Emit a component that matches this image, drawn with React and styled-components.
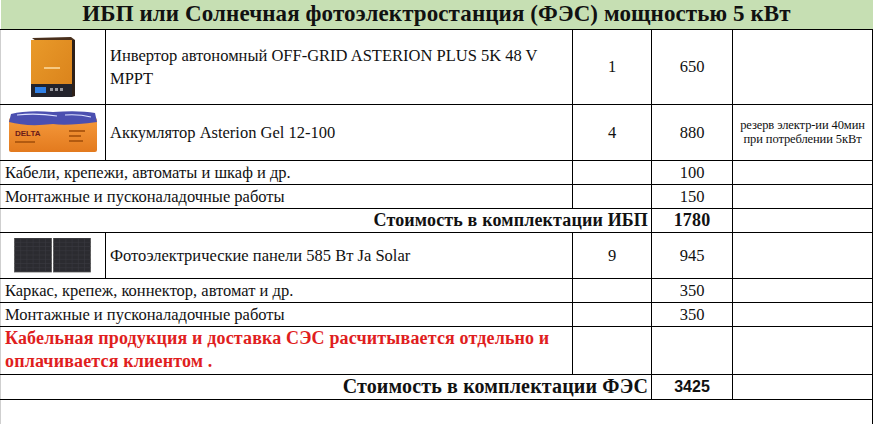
import React from 'react';
import styled, { createGlobalStyle } from 'styled-components';

const SERIF = `'Liberation Serif', 'Times New Roman', 'DejaVu Serif', serif`;
const SANS = `'Liberation Sans', Arial, sans-serif`;

const Global = createGlobalStyle`
  html, body { margin: 0; padding: 0; background: #fff; }
  body { font-family: ${SERIF}; }
`;

const Table = styled.table`
  width: 872px;
  border-collapse: collapse;
  table-layout: fixed;
  font-family: ${SERIF};
  font-size: 16px;
  color: #111;
`;

const Row = styled.tr`
  height: ${(p) => p.$h}px;
`;

const Title = styled.th`
  background: #c6dfb3;
  font-family: ${SERIF};
  font-size: 23px;
  letter-spacing: 0.1px;
  font-weight: bold;
  text-align: center;
  padding: 0;
  border-bottom: 1px solid #000;
  line-height: 26px;
  color: #111;
`;

const Cell = styled.td`
  border: 1px solid #000;
  padding: 0 ${(p) => (p.$align === 'right' ? '3px' : '4px')} 0 4px;
  vertical-align: middle;
  line-height: 23px;
  font-size: ${(p) => p.$size || 16.5}px;
  letter-spacing: ${(p) => (p.$bold && !p.$sans ? '0.15px' : '0')};
  text-align: ${(p) => p.$align || 'left'};
  font-weight: ${(p) => (p.$bold ? 'bold' : 'normal')};
  font-family: ${(p) => (p.$sans ? SANS : SERIF)};
  color: ${(p) => (p.$red ? '#e01e1e' : '#111')};
  overflow: hidden;
  &:first-child { border-left-color: #cfcfcf; }
`;

const NoteCell = styled(Cell)`
  padding: 0;
  text-align: center;
`;

const Note = styled.div`
  font-size: 12.5px;
  line-height: 14px;
  white-space: nowrap;
  letter-spacing: -0.1px;
  text-align: center;
`;

const PicCell = styled(Cell)`
  padding: 0;
  text-align: center;
  line-height: 0;
`;

const Inverter = () => (
  <svg width="48" height="62" viewBox="0 0 48 62">
    <defs>
      <linearGradient id="inv" x1="0" x2="1" y1="0" y2="1">
        <stop offset="0" stopColor="#e99a2a" />
        <stop offset="1" stopColor="#d9811a" />
      </linearGradient>
    </defs>
    <polygon points="3,2 42,1 46,4 7,5" fill="#4a301c" />
    <rect x="2" y="4" width="41" height="57" fill="url(#inv)" />
    <polygon points="43,4 46,4 46,60 43,61" fill="#2e2018" />
    <rect x="15" y="31" width="16" height="2" fill="#f6c983" />
    <rect x="2" y="48" width="41" height="13" fill="#23232c" />
    <rect x="6" y="51" width="11" height="6" fill="#2f80e6" />
    <rect x="21" y="52" width="3" height="3" fill="#9a9aa0" />
    <rect x="26" y="52" width="3" height="3" fill="#9a9aa0" />
    <rect x="31" y="52" width="3" height="3" fill="#9a9aa0" />
  </svg>
);

const Battery = () => (
  <svg width="92" height="44" viewBox="0 0 92 44">
    <defs>
      <linearGradient id="bat" x1="0" x2="0" y1="0" y2="1">
        <stop offset="0" stopColor="#f59a3c" />
        <stop offset="1" stopColor="#e37a1e" />
      </linearGradient>
    </defs>
    <rect x="2" y="8" width="88" height="34" rx="2" fill="url(#bat)" />
    <path d="M4 4 Q20 0 46 2 Q72 0 88 3 L90 12 Q60 16 46 14 Q20 17 2 12 Z" fill="#4b4fb0" />
    <path d="M10 5 Q30 3 50 6 M58 5 Q72 4 84 7" stroke="#dfe3ff" strokeWidth="1.2" fill="none" />
    <text x="8" y="26" fontFamily="Liberation Sans, Arial, sans-serif" fontWeight="bold" fontSize="8" fill="#6a1a1a">DELTA</text>
    <rect x="8" y="31" width="20" height="2" fill="#b25a10" />
    <rect x="62" y="20" width="16" height="2" fill="#b25a10" />
    <rect x="62" y="25" width="12" height="2" fill="#b25a10" />
    <rect x="62" y="30" width="14" height="2" fill="#b25a10" />
  </svg>
);

const Panel = ({ x }) => (
  <g>
    <rect x={x} y="0" width="37" height="34" fill="#2b2b30" stroke="#555" strokeWidth="0.8" />
    {[1, 2, 3, 4, 5, 6, 7].map((i) => (
      <line key={'h' + i} x1={x} x2={x + 37} y1={i * 4.25} y2={i * 4.25} stroke="#3b3b42" strokeWidth="0.6" />
    ))}
    {[1, 2, 3, 4, 5].map((i) => (
      <line key={'v' + i} x1={x + i * 6.2} x2={x + i * 6.2} y1="0" y2="34" stroke="#3b3b42" strokeWidth="0.6" />
    ))}
  </g>
);

const Solar = () => (
  <svg width="78" height="35" viewBox="0 0 78 35">
    <Panel x={0.5} />
    <Panel x={39.5} />
  </svg>
);

export default function App() {
  return (
    <>
      <Global />
      <Table>
        <colgroup>
          <col style={{ width: 105 }} />
          <col style={{ width: 467 }} />
          <col style={{ width: 79 }} />
          <col style={{ width: 81 }} />
          <col style={{ width: 140 }} />
        </colgroup>
        <tbody>
          <Row $h={29}>
            <Title colSpan={5}>ИБП или Солнечная фотоэлектростанция (ФЭС) мощностью 5 кВт</Title>
          </Row>
          <Row $h={75}>
            <PicCell><Inverter /></PicCell>
            <Cell>Инвертор автономный OFF-GRID ASTERION PLUS 5K 48 V MPPT</Cell>
            <Cell $align="center">1</Cell>
            <Cell $align="center">650</Cell>
            <Cell />
          </Row>
          <Row $h={56}>
            <PicCell><Battery /></PicCell>
            <Cell>Аккумлятор Asterion Gel 12-100</Cell>
            <Cell $align="center">4</Cell>
            <Cell $align="center">880</Cell>
            <NoteCell>
              <Note>резерв электр-ии 40мин<br />при потреблении 5кВт</Note>
            </NoteCell>
          </Row>
          <Row $h={23}>
            <Cell colSpan={2}>Кабели, крепежи, автоматы и шкаф и др.</Cell>
            <Cell />
            <Cell $align="center">100</Cell>
            <Cell />
          </Row>
          <Row $h={24}>
            <Cell colSpan={2}>Монтажные и пусконаладочные работы</Cell>
            <Cell />
            <Cell $align="center">150</Cell>
            <Cell />
          </Row>
          <Row $h={23}>
            <Cell colSpan={3} $align="right" $bold $size={18}>Стоимость в комплектации ИБП</Cell>
            <Cell $align="center" $bold $size={18}>1780</Cell>
            <Cell />
          </Row>
          <Row $h={46}>
            <PicCell><Solar /></PicCell>
            <Cell>Фотоэлектрические панели 585 Вт Ja Solar</Cell>
            <Cell $align="center">9</Cell>
            <Cell $align="center">945</Cell>
            <Cell />
          </Row>
          <Row $h={24}>
            <Cell colSpan={2}>Каркас, крепеж, коннектор, автомат и др.</Cell>
            <Cell />
            <Cell $align="center">350</Cell>
            <Cell />
          </Row>
          <Row $h={24}>
            <Cell colSpan={2}>Монтажные и пусконаладочные работы</Cell>
            <Cell />
            <Cell $align="center">350</Cell>
            <Cell />
          </Row>
          <Row $h={48}>
            <Cell colSpan={2} $bold $red $size={18}>
              Кабельная продукция и доставка СЭС расчитывается отдельно и оплачивается клиентом .
            </Cell>
            <Cell />
            <Cell />
            <Cell />
          </Row>
          <Row $h={25}>
            <Cell colSpan={3} $align="right" $bold $size={20}>Стоимость в комплектации ФЭС</Cell>
            <Cell $align="center" $bold $sans $size={16}>3425</Cell>
            <Cell />
          </Row>
          <Row $h={25}>
            <Cell colSpan={5} />
          </Row>
        </tbody>
      </Table>
    </>
  );
}
